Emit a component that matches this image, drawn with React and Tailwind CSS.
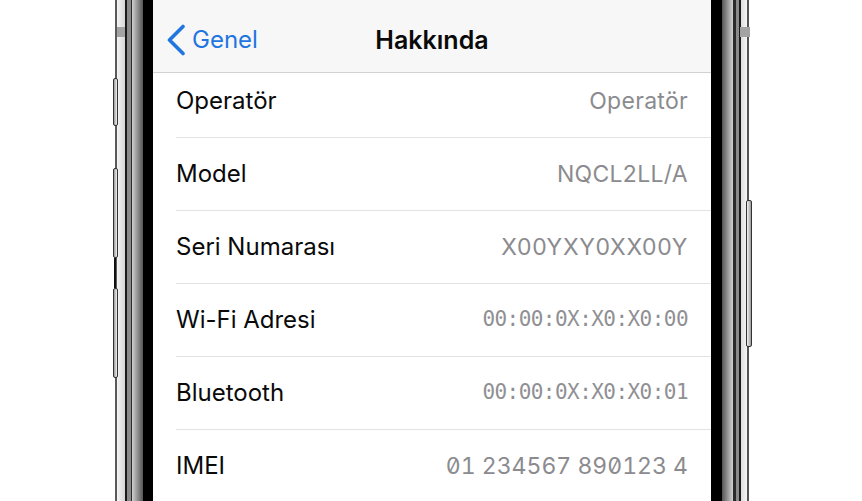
import React from "react";

const rows = [
  { label: "Operatör", value: "Operatör", kind: "text" },
  { label: "Model", value: "NQCL2LL/A", kind: "text" },
  { label: "Seri Numarası", value: "X00YXY0XX00Y", kind: "serial" },
  { label: "Wi-Fi Adresi", value: "00:00:0X:X0:X0:00", kind: "mono" },
  { label: "Bluetooth", value: "00:00:0X:X0:X0:01", kind: "mono" },
  { label: "IMEI", value: "01 234567 890123 4", kind: "imei" },
];

function Value({ kind, children }) {
  if (kind === "mono") {
    return (
      <span className="font-['DejaVu_Sans_Mono',monospace] text-[21px] tracking-[-0.55px] text-[#909094]">
        {children}
      </span>
    );
  }
  if (kind === "imei") {
    return (
      <span className="font-['Inter',sans-serif] text-[23px] text-[#8b8b8f] [font-feature-settings:'tnum','zero']">
        {children}
      </span>
    );
  }
  if (kind === "serial") {
    return (
      <span className="font-['Inter',sans-serif] text-[23px] tracking-[0.7px] text-[#8b8b8f]">{children}</span>
    );
  }
  return (
    <span className="font-['Inter',sans-serif] text-[23px] tracking-[0.3px] text-[#8b8b8f]">{children}</span>
  );
}

export default function App() {
  return (
    <div className="w-[862px] h-[501px] overflow-hidden bg-white flex relative font-['Inter',sans-serif]">
      <div className="w-[113px] shrink-0 bg-white" />
      {/* left frame */}
      <div className="w-[40px] shrink-0 h-full relative bg-[linear-gradient(to_right,#ffffff_0px,#ffffff_2px,#5a5a5a_2px,#5a5a5a_4px,#f4f4f4_4px,#d6d6d6_12px,#1a1a1a_12px,#1a1a1a_14px,#8a8a8a_14px,#8a8a8a_18px,#2a2a2a_18px,#2a2a2a_19px,#cfcfcf_19px,#565656_30px,#000000_30px,#000000_40px)]">
        <div className="absolute left-[4px] top-[27px] w-[8px] h-[10px] bg-[#a3a3a3]" />
        <div className="absolute left-0 top-[78px] w-[5px] h-[48px] rounded-[2px] border border-[#333] bg-[linear-gradient(to_right,#9a9a9a,#f4f4f4)]" />
        <div className="absolute left-0 top-[168px] w-[5px] h-[90px] rounded-[2px] border border-[#333] bg-[linear-gradient(to_right,#9a9a9a,#f4f4f4)]" />
        <div className="absolute left-[1px] top-[258px] w-[2px] h-[30px] bg-[#111]" />
        <div className="absolute left-0 top-[288px] w-[5px] h-[90px] rounded-[2px] border border-[#333] bg-[linear-gradient(to_right,#9a9a9a,#f4f4f4)]" />
      </div>

      {/* screen */}
      <div className="w-[558px] shrink-0 h-full flex flex-col bg-white overflow-hidden">
        <div className="h-[73px] shrink-0 bg-[#f7f7f7] border-b border-[#d2d2d2] grid grid-cols-[1fr_auto_1fr] items-center pt-[8px]">
          <div className="flex items-center pl-[13px] text-[#1f76e0]">
            <svg width="20" height="32" viewBox="0 0 20 32" fill="none">
              <path d="M17 2.5 L3.5 16 L17 29.5" stroke="#1f76e0" strokeWidth="3.6" strokeLinecap="round" strokeLinejoin="round" />
            </svg>
            <span className="ml-[6px] text-[24px] leading-none">Genel</span>
          </div>
          <div className="text-[25px] font-semibold leading-none text-[#0a0a0a]">Hakkında</div>
          <div />
        </div>

        <div className="flex flex-col">
          {rows.map((r, i) => (
            <div
              key={r.label}
              className={
                i === 0
                  ? "h-[65px] shrink-0 ml-[23px] pr-[23px] pb-[8px] border-b border-[#e3e3e3] flex items-center justify-between"
                  : "h-[73px] shrink-0 ml-[23px] pr-[23px] border-b border-[#e3e3e3] flex items-center justify-between"
              }
            >
              <span className="text-[24px] text-[#0a0a0a]">{r.label}</span>
              <Value kind={r.kind}>{r.value}</Value>
            </div>
          ))}
        </div>
      </div>

      {/* right frame */}
      <div className="w-[41px] shrink-0 h-full relative bg-[linear-gradient(to_right,#000000_0px,#000000_11px,#555555_11px,#d2d2d2_22px,#2a2a2a_22px,#2a2a2a_25px,#8a8a8a_25px,#8a8a8a_28px,#1a1a1a_28px,#1a1a1a_30px,#dedede_30px,#f6f6f6_36px,#555555_36px,#555555_38px,#ffffff_38px,#ffffff_41px)]">
        <div className="absolute left-[29px] top-[27px] w-[10px] h-[10px] bg-[#a3a3a3]" />
        <div className="absolute left-[35px] top-[200px] w-[6px] h-[147px] rounded-[2px] border border-[#333] bg-[linear-gradient(to_right,#f4f4f4,#9a9a9a)]" />
      </div>
      <div className="flex-1 bg-white" />
    </div>
  );
}
